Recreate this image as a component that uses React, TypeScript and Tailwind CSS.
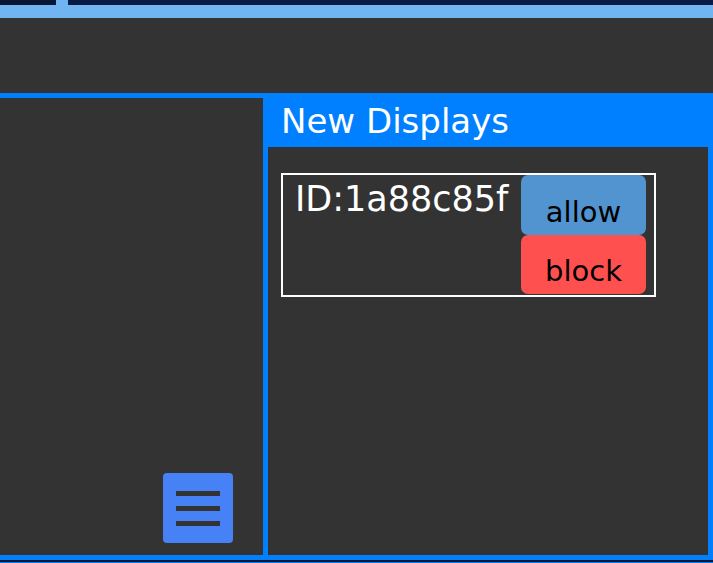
export default function App() {
  const font = { fontFamily: '"DejaVu Sans", Verdana, sans-serif' };

  return (
    <div className="w-[713px] h-[563px] overflow-hidden bg-[#0080ff] flex flex-col" style={font}>
      {/* top tab strip */}
      <div className="h-[5px] flex">
        <div className="w-[56px] bg-[#061634]" />
        <div className="w-[12px] bg-[#70b5f1]" />
        <div className="flex-1 bg-[#071a45]" />
      </div>
      <div className="h-[13px] bg-[#70b5f1]" />

      {/* header area */}
      <div className="h-[75px] bg-[#333333]" />

      {/* main panels */}
      <div className="h-[467px] flex border-[5px] border-l-0 border-[#0080ff]">
        <div className="w-[268px] shrink-0 bg-[#333333] border-r-[5px] border-[#0080ff] flex items-end justify-end pr-[30px] pb-[12px]">
          <button className="w-[70px] h-[70px] rounded-[4px] bg-[#4682f5] flex flex-col items-center justify-center gap-[10px]">
            <span className="block w-[44px] h-[5px] bg-[#333333]" />
            <span className="block w-[44px] h-[5px] bg-[#333333]" />
            <span className="block w-[44px] h-[5px] bg-[#333333]" />
          </button>
        </div>

        <div className="flex-1 flex flex-col">
          <div className="h-[49px] shrink-0 bg-[#0080ff] pl-[13px] pt-[6px]">
            <h2 className="text-[34px] leading-none text-white">New Displays</h2>
          </div>
          <div className="flex-1 bg-[#333333] pl-[13px] pt-[26px]">
            <div className="w-[375px] h-[124px] border-2 border-white flex justify-between pr-[8px]">
              <div className="pl-[12px] pt-[7px] text-[35px] leading-none text-white">ID:1a88c85f</div>
              <div className="flex flex-col w-[125px]">
                <button className="h-[60px] rounded-[7px] bg-[#5294d0] text-black text-[29px] leading-none flex items-end justify-center pb-[8px]">
                  allow
                </button>
                <button className="h-[59px] rounded-[7px] bg-[#ff5050] text-black text-[29px] leading-none flex items-end justify-center pb-[8px]">
                  block
                </button>
              </div>
            </div>
          </div>
        </div>
      </div>

      {/* bottom strip */}
      <div className="h-[2px] bg-[#061634]" />
      <div className="flex-1 bg-[#0080ff]" />
    </div>
  );
}
